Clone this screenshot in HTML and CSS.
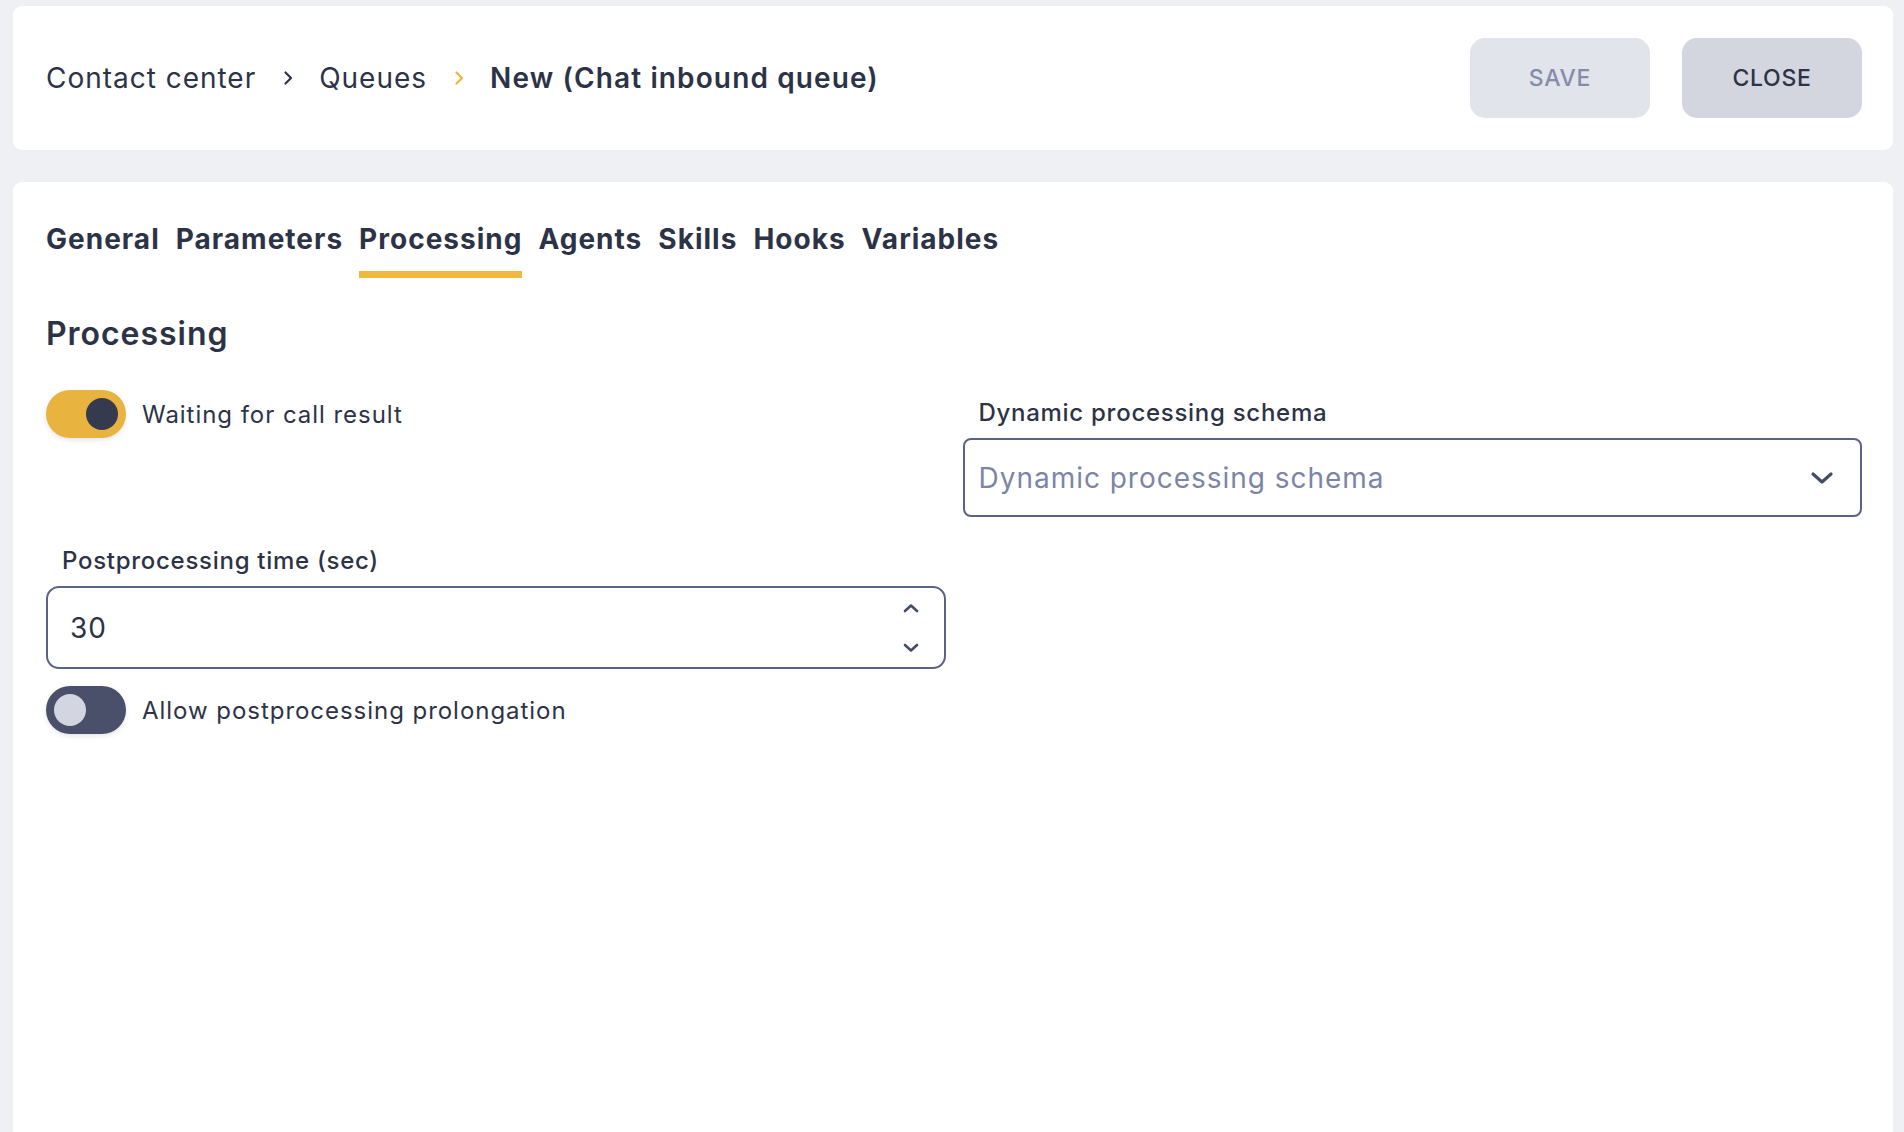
FILE: index.html
```html
<!DOCTYPE html>
<html lang="en">
<head>
    <meta charset="UTF-8">
    <meta name="viewport" content="width=device-width, initial-scale=1.0">
    <title>New (Chat inbound queue)</title>
    <link rel="stylesheet" href="styles.css">
</head>
<body>

<div class="page">
    <header class="topbar">
        <nav class="crumbs">
            <span class="crumb">Contact center</span>
            <svg class="crumb-sep" viewBox="0 0 10 16" width="10" height="16"><path d="M2.5 2.5 L8 8 L2.5 13.5" /></svg>
            <span class="crumb">Queues</span>
            <svg class="crumb-sep crumb-sep-last" viewBox="0 0 10 16" width="10" height="16"><path d="M2.5 2.5 L8 8 L2.5 13.5" /></svg>
            <span class="crumb crumb-current">New (Chat inbound queue)</span>
        </nav>
        <div class="actions">
            <button class="btn btn-save" disabled>SAVE</button>
            <button class="btn btn-close">CLOSE</button>
        </div>
    </header>

    <main class="card">
        <ul class="tabs">
            <li class="tab">General</li>
            <li class="tab">Parameters</li>
            <li class="tab active">Processing</li>
            <li class="tab">Agents</li>
            <li class="tab">Skills</li>
            <li class="tab">Hooks</li>
            <li class="tab">Variables</li>
        </ul>

        <h2 class="section-title">Processing</h2>

        <div class="form-grid">
            <label class="switch-row">
                <span class="switch on"><span class="knob"></span></span>
                <span class="switch-label">Waiting for call result</span>
            </label>

            <div class="field field-top">
                <div class="field-label">Dynamic processing schema</div>
                <div class="select">
                    <span class="placeholder">Dynamic processing schema</span>
                    <svg class="select-arrow" viewBox="0 0 24 14" width="24" height="14"><path d="M3 3 L12 11 L21 3" /></svg>
                </div>
            </div>

            <div class="col">
                <div class="field">
                    <div class="field-label">Postprocessing time (sec)</div>
                    <div class="number-input">
                        <span class="value">30</span>
                        <span class="spinner">
                            <svg viewBox="0 0 18 10" width="18" height="10"><path d="M3 8 L9 2.5 L15 8" /></svg>
                            <svg viewBox="0 0 18 10" width="18" height="10"><path d="M3 2 L9 7.5 L15 2" /></svg>
                        </span>
                    </div>
                </div>
                <label class="switch-row switch-row-bottom">
                    <span class="switch"><span class="knob"></span></span>
                    <span class="switch-label">Allow postprocessing prolongation</span>
                </label>
            </div>
        </div>
    </main>
</div>

</body>
</html>
```

FILE: styles.css
```css
html, body {
    height: 100%;
}
body {
    margin: 0;
    background: #eff0f4;
    font-family: "Inter", "Noto Sans", sans-serif;
    color: #2d3347;
    overflow: hidden;
}
.page {
    display: flex;
    flex-direction: column;
    gap: 32px;
    height: 100%;
    padding: 6px 11px 0 13px;
    box-sizing: border-box;
}

/* top bar */
.topbar {
    display: flex;
    align-items: center;
    justify-content: space-between;
    background: #fff;
    border-radius: 9px;
    padding: 32px 31px 32px 33px;
}
.crumbs {
    display: flex;
    align-items: center;
    font-size: 28px;
}
.crumb {
    letter-spacing: 0.035em;
}
.crumb-current {
    font-weight: 600;
    letter-spacing: 0.04em;
}
.crumb-sep {
    margin: 0 26px 0 27px;
    fill: none;
    stroke: #2d3347;
    stroke-width: 2.2;
    stroke-linecap: round;
    stroke-linejoin: round;
}
.crumb-sep-last {
    stroke: #eeb53a;
}
.actions {
    display: flex;
    gap: 32px;
}
.btn {
    width: 180px;
    height: 80px;
    border: none;
    border-radius: 15px;
    font-family: inherit;
    font-size: 23px;
    font-weight: 500;
    letter-spacing: 0.03em;
    cursor: pointer;
}
.btn-save {
    background: #e2e4eb;
    color: #858cab;
    cursor: default;
}
.btn-close {
    background: #d3d5df;
    color: #2d3347;
}

/* main card */
.card {
    flex: 1;
    background: #fff;
    border-radius: 9px 9px 0 0;
    padding: 0 31px 0 33px;
}
.tabs {
    display: flex;
    gap: 16px;
    list-style: none;
    margin: 0;
    padding: 40px 0 0;
}
.tab {
    font-size: 28px;
    font-weight: 700;
    line-height: 34px;
    letter-spacing: 0.036em;
    padding-bottom: 15px;
    border-bottom: 7px solid transparent;
    cursor: pointer;
}
.tab.active {
    border-bottom-color: #f0b83e;
}
.section-title {
    margin: 36px 0 0;
    font-size: 32px;
    font-weight: 600;
    line-height: 40px;
    letter-spacing: 0.03em;
}

/* form */
.form-grid {
    display: grid;
    grid-template-columns: 1fr 1fr;
    column-gap: 17px;
    row-gap: 29px;
    margin-top: 36px;
    align-items: start;
}
.switch-row {
    display: flex;
    align-items: center;
    gap: 16px;
    cursor: pointer;
}
.switch-row-bottom {
    margin-top: 17px;
}
.switch {
    position: relative;
    width: 80px;
    height: 48px;
    border-radius: 24px;
    background: #4a5069;
    box-shadow: 0 2px 5px rgba(45, 51, 71, 0.12);
    flex-shrink: 0;
}
.switch .knob {
    position: absolute;
    top: 8px;
    left: 8px;
    width: 32px;
    height: 32px;
    border-radius: 50%;
    background: #d3d5e0;
}
.switch.on {
    background: #e8b33f;
}
.switch.on .knob {
    left: auto;
    right: 8px;
    background: #353a4f;
}
.switch-label {
    font-size: 24px;
    letter-spacing: 0.04em;
}
.field-top {
    margin-top: 8px;
}
.field-label {
    padding-left: 16px;
    font-size: 24px;
    font-weight: 500;
    line-height: 30px;
    margin-bottom: 10px;
    letter-spacing: 0.03em;
}
.select {
    display: flex;
    align-items: center;
    justify-content: space-between;
    height: 79px;
    box-sizing: border-box;
    border: 2px solid #5b6283;
    border-radius: 8px;
    padding: 0 26px 0 14px;
}
.placeholder {
    font-size: 28px;
    color: #7c85a8;
    letter-spacing: 0.035em;
}
.select-arrow {
    fill: none;
    stroke: #454c66;
    stroke-width: 3.2;
    stroke-linecap: round;
    stroke-linejoin: round;
}
.number-input {
    display: flex;
    align-items: center;
    justify-content: space-between;
    height: 83px;
    box-sizing: border-box;
    border: 2px solid #5b6283;
    border-radius: 13px;
    padding: 0 24px 0 22px;
}
.value {
    font-size: 28px;
    letter-spacing: 0.03em;
}
.spinner {
    display: flex;
    flex-direction: column;
    gap: 30px;
}
.spinner svg {
    fill: none;
    stroke: #454c66;
    stroke-width: 2.6;
    stroke-linecap: round;
    stroke-linejoin: round;
}
```
